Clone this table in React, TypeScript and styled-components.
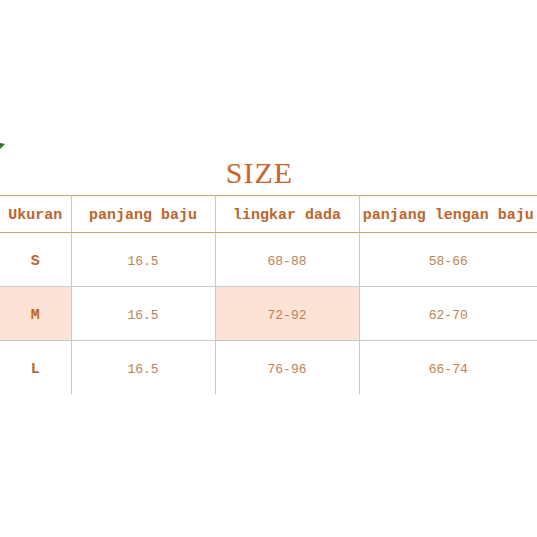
import React from "react";
import styled, { createGlobalStyle } from "styled-components";

const Global = createGlobalStyle`
  html, body { margin: 0; padding: 0; background: #fff; }
  body { width: 537px; height: 537px; overflow: hidden; }
`;

const Page = styled.div`
  position: relative;
  width: 537px;
  height: 537px;
  padding-top: 155px;
  box-sizing: border-box;
`;

const Mark = styled.svg`
  position: absolute;
  left: 0;
  top: 143px;
`;

const Title = styled.h1`
  margin: 0;
  height: 40px;
  width: 519px;
  text-align: center;
  font-family: "Liberation Serif", serif;
  font-weight: normal;
  font-size: 30px;
  line-height: 36px;
  letter-spacing: 1px;
  color: #c7652b;
`;

const Table = styled.table`
  border-collapse: collapse;
  table-layout: fixed;
  width: 537px;
  border-top: 1px solid #d8a070;
`;

const Col = styled.col<{ $w: number }>`
  width: ${(p) => p.$w}px;
`;

const Th = styled.th`
  height: 33px;
  padding: 3px 0 0;
  text-align: center;
  font-family: "Liberation Mono", monospace;
  font-weight: bold;
  font-size: 15px;
  color: #c0652a;
  border-bottom: 1px solid #d8a070;
  border-left: 1px solid #c8c8d0;
  white-space: nowrap;
  &:first-child { border-left: none; }
`;

const Td = styled.td<{ $hl?: boolean; $bold?: boolean }>`
  height: 49px;
  padding: 4px 0 0;
  text-align: center;
  font-family: "Liberation Mono", monospace;
  font-size: ${(p) => (p.$bold ? "15px" : "13px")};
  font-weight: ${(p) => (p.$bold ? "bold" : "normal")};
  color: ${(p) => (p.$bold ? "#c0652a" : "#c08250")};
  background: ${(p) => (p.$hl ? "#fde3d6" : "transparent")};
  border-left: 1px solid #c8c8d0;
  border-bottom: 1px solid #c8c8d0;
  &:first-child { border-left: none; }
`;

const LastRow = styled.tr`
  & > td { border-bottom: none; }
`;

const rows = [
  { s: "S", a: "16.5", b: "68-88", c: "58-66", hl: false },
  { s: "M", a: "16.5", b: "72-92", c: "62-70", hl: true },
  { s: "L", a: "16.5", b: "76-96", c: "66-74", hl: false },
];

export default function App() {
  return (
    <>
      <Global />
      <Page>
        <Mark width="5" height="7" viewBox="0 0 5 7">
          <path d="M0 0 L5 1 L1 5 L0 6 Z" fill="#1e7a1e" />
        </Mark>
        <Title>SIZE</Title>
        <Table>
          <colgroup>
            <Col $w={71} />
            <Col $w={144} />
            <Col $w={144} />
            <Col $w={178} />
          </colgroup>
          <thead>
            <tr>
              <Th>Ukuran</Th>
              <Th>panjang baju</Th>
              <Th>lingkar dada</Th>
              <Th>panjang lengan baju</Th>
            </tr>
          </thead>
          <tbody>
            {rows.map((r, i) => {
              const cells = (
                <>
                  <Td $bold $hl={r.hl}>{r.s}</Td>
                  <Td>{r.a}</Td>
                  <Td $hl={r.hl}>{r.b}</Td>
                  <Td>{r.c}</Td>
                </>
              );
              return i === rows.length - 1 ? (
                <LastRow key={r.s}>{cells}</LastRow>
              ) : (
                <tr key={r.s}>{cells}</tr>
              );
            })}
          </tbody>
        </Table>
      </Page>
    </>
  );
}
